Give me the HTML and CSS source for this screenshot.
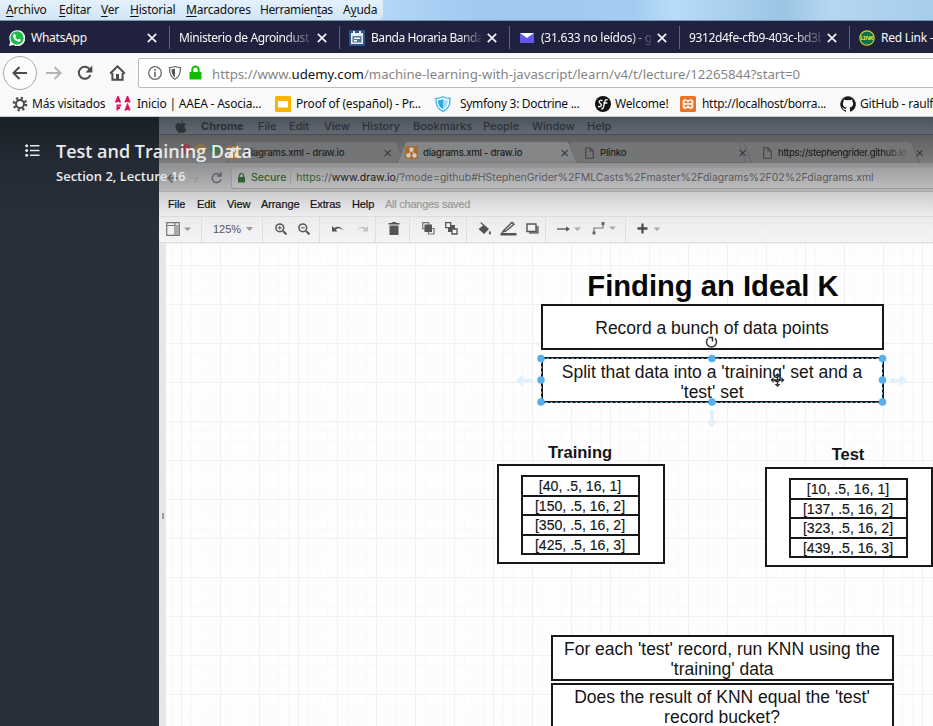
FILE: index.html
```html
<!DOCTYPE html>
<html lang="es">
<head>
<meta charset="utf-8">
<title>Test and Training Data</title>
<link rel="stylesheet" href="styles.css">
</head>
<body>
<nav class="menubar">
  <div class="menus"><span><u>A</u>rchivo</span><span><u>E</u>ditar</span><span><u>V</u>er</span><span><u>H</u>istorial</span><span><u>M</u>arcadores</span><span>Herramien<u>t</u>as</span><span>A<u>y</u>uda</span></div>
</nav>
<div class="tabs">
  <div class="tab">
    <svg class="fav" viewBox="0 0 16 16"><path d="M0 16l1.2-4.2A8 8 0 1 1 4.200 15z" fill="#fff"/><circle cx="8" cy="8" r="6.700" fill="#20b94b"/><path d="M4.600 4.300l1.400-.3 1 2.200-.7 1q.9 1.700 2.700 2.500l.9-1 2.100 1q-.2 2-2.200 2-5-.9-5.700-5.500z" fill="#fff"/></svg>
    <span class="label t1">WhatsApp</span><svg class="close" viewBox="0 0 10 10"><path d="M.8.8l8.400 8.400M9.200.8L.8 9.200"/></svg>
  </div>
  <div class="tab"><span class="label t2 fade">Ministerio de Agroindust</span><svg class="close" viewBox="0 0 10 10"><path d="M.8.8l8.400 8.400M9.200.8L.8 9.200"/></svg></div>
  <div class="tab">
    <svg class="fav" viewBox="0 0 16 16"><path fill="#2d5688" d="M0 0h16v16H0z"/><path fill="#e8eef5" d="M2 3h2V1h2v2h4V1h2v2h2v11H2z"/><path fill="#54779f" d="M3.500 6h9v6.500h-9z"/><path fill="#fff" d="M5 7.500h6v1.500H5zM5 10h3v1.500H5z"/></svg>
    <span class="label t3 fade">Banda Horaria Banda</span><svg class="close" viewBox="0 0 10 10"><path d="M.8.8l8.400 8.400M9.200.8L.8 9.200"/></svg>
  </div>
  <div class="tab">
    <svg class="fav" viewBox="0 0 16 16"><path fill="#6257ee" d="M1 3h14v10H1z"/><path d="M1 3h14l-7 5z" fill="#fff"/></svg>
    <span class="label t4 fade">(31.633 no leídos) - g</span><svg class="close" viewBox="0 0 10 10"><path d="M.8.8l8.400 8.400M9.200.8L.8 9.200"/></svg>
  </div>
  <div class="tab"><span class="label t5 fade">9312d4fe-cfb9-403c-bd3b</span><svg class="close" viewBox="0 0 10 10"><path d="M.8.8l8.400 8.400M9.200.8L.8 9.200"/></svg></div>
  <div class="tab">
    <svg class="fav" viewBox="0 0 16 16"><circle cx="8" cy="8" r="7.200" fill="#087250" stroke="#d8d41c" stroke-width="1.200"/><text x="8" y="10.300" font-size="6" font-weight="bold" fill="#dfe02a" text-anchor="middle" textLength="13">LINK</text></svg>
    <span class="label t6">Red Link -</span>
  </div>
</div>
<div class="navbar">
  <div class="back"><svg width="18" height="16" viewBox="0 0 18 16"><path d="M16 8H3M8.500 2L2.500 8l6 6"/></svg></div>
  <svg class="fwd" width="17" height="16" viewBox="0 0 17 16"><path d="M1 8h14M9.500 2l6 6-6 6"/></svg>
  <svg class="reload" width="16" height="16" viewBox="0 0 16 16"><path d="M13.400 10A6 6 0 1 1 12.800 4.500"/><path d="M15.300.5v7H8.500z" class="solid"/></svg>
  <svg class="home" width="17" height="16" viewBox="0 0 17 16"><path d="M1.200 8.500L8.500 1.400l7.300 7.100M3.400 8v6.800h10.200V8"/><path d="M7 9h3v6H7z" class="solid"/></svg>
  <div class="urlbox">
    <svg width="16" height="16" viewBox="0 0 16 16"><circle cx="8" cy="8" r="6.300" fill="none" stroke="#696969" stroke-width="1.300"/><path d="M7.200 4h1.600v1.700H7.200zM7.200 6.800h1.600V12H7.200z" fill="#696969"/></svg>
    <svg width="14" height="16" viewBox="0 0 14 16"><path d="M7 1.500q2.500 1 5.500 1.200 0 8.800-5.500 11.600Q1.500 11.500 1.500 2.700 4.500 2.500 7 1.500z" fill="none" stroke="#666" stroke-width="1.200"/><path d="M7 3.600q1.600.7 3.600.9-.2 5.500-3.600 7.700z" fill="#555" transform="matrix(-1 0 0 1 14 0)"/></svg>
    <svg width="13" height="16" viewBox="0 0 13 16"><path d="M.5 7h12v7.500H.5z" fill="#12bc00"/><path d="M3.300 7V4.700a3.200 3.200 0 0 1 6.400 0V7" fill="none" stroke="#12bc00" stroke-width="2"/></svg>
    <span class="url">https://www.<b>udemy.com</b>/machine-learning-with-javascript/learn/v4/t/lecture/12265844?start=0</span>
  </div>
</div>
<div class="bookmarks">
  <a class="bm b1"><svg viewBox="0 0 16 16"><circle cx="8" cy="8" r="4" fill="none" stroke="#4a4a4f" stroke-width="2"/><circle cx="8" cy="8" r="6" fill="none" stroke="#4a4a4f" stroke-width="2.600" stroke-dasharray="2.200 2.512"/></svg><span>Más visitados</span></a>
  <a class="bm b2"><svg viewBox="0 0 16 16" fill="none" stroke="#df1264" stroke-width="1.900"><path d="M.8 6.500l2.200-5.500 2.200 5.500M2 5h2.500M10.300 6.500l2.200-5.500 2.200 5.500M11.500 5H14M2.500 14.500V9.500h3.500M2.500 12h2.500M10.300 14.500l2.200-5.500 2.200 5.500M11.500 13H14"/></svg><span>Inicio | AAEA - Asocia...</span></a>
  <a class="bm b3"><svg viewBox="0 0 16 16"><rect width="16" height="16" rx="1.500" fill="#f7b500"/><path fill="#fff" d="M3 5h10v6.500H3z"/></svg><span>Proof of (español) - Pr...</span></a>
  <a class="bm b4"><svg viewBox="0 0 16 16"><path d="M8 .8q3 1.700 7 1.700Q15.500 12 8 15.400.500 12 1 2.500 5 2.500 8 .8z" fill="#fff" stroke="#32b5ed" stroke-width="1.300"/><path d="M8 3q2 1.200 5 1.300Q12.700 11 8 13.300z" fill="#a9dcf5"/><path d="M8 3v10.300Q3 11 3 4.300 6 4.200 8 3z" fill="#2ca9e3"/></svg><span>Symfony 3: Doctrine ...</span></a>
  <a class="bm b5"><svg viewBox="0 0 16 16"><circle cx="8" cy="8" r="8" fill="#111"/><path d="M7.300 5.200Q6.700 3.700 5 4.500 3 6 5.500 7.500q2 2-.5 3.200-1.500.3-1.700-.8M12.500 4.200q-1.600-1.600-2.600 1L8.500 11Q7.800 13.500 6 12.800M8.300 7h4" fill="none" stroke="#fff" stroke-width="1.300"/></svg><span>Welcome!</span></a>
  <a class="bm b6"><svg viewBox="0 0 16 16"><rect width="16" height="16" rx="1.500" fill="#ec7323"/><path d="M5.500 4a2 2 0 1 0 0 4h5a2 2 0 1 0 0-4q-2 0-2.500 2Q7.500 4 5.500 4zM5.500 8a2 2 0 1 0 0 4q2 0 2.500-2 .5 2 2.500 2a2 2 0 1 0 0-4" fill="none" stroke="#fff" stroke-width="1.700"/></svg><span>http://localhost/borra...</span></a>
  <a class="bm b7"><svg viewBox="0 0 16 16"><path fill="#191717" d="M8 .2a8 8 0 0 0-2.500 15.500c.4.100.5-.2.500-.4v-1.400c-2.200.5-2.700-1-2.700-1-.4-.9-.9-1.200-.9-1.200-.7-.5.100-.5.100-.5.800.1 1.200.8 1.200.8.700 1.200 1.900.9 2.300.7.100-.5.300-.9.500-1.100-1.800-.2-3.600-.9-3.600-4 0-.9.300-1.600.8-2.100-.1-.2-.4-1 .1-2.100 0 0 .7-.2 2.200.8a7.700 7.700 0 0 1 4 0c1.500-1 2.200-.8 2.200-.8.4 1.100.2 1.900.1 2.100.5.600.8 1.300.8 2.100 0 3.100-1.900 3.800-3.700 4 .3.300.6.800.6 1.500v2.200c0 .2.100.5.600.4A8 8 0 0 0 8 .2z"/></svg><span>GitHub - raulf</span></a>
</div>
<main class="player">
  <div class="side"></div>
  <section class="video">
    <div class="macbar">
      <svg width="12" height="13" viewBox="0 0 12 13"><path fill="#2d3138" d="M8.300 0Q8.500 2 6 3.100 5.700 1 8.300 0zM6 3.700q1-.7 2.400-.7 1.600 0 2.600 1.300-1.700 1-1.500 3T11.500 9.800Q10 13 8.400 12.800q-1.400-.7-2.500-.2Q4 13.400 3 12.200-1 7.500 1 4.400 2.800 2 6 3.700z"/></svg>
      <strong>Chrome</strong><span>File</span><span>Edit</span><span>View</span><span>History</span><span>Bookmarks</span><span>People</span><span>Window</span><span>Help</span>
    </div>
    <div class="chrometabs">
      <svg class="shapes" width="774" height="29" viewBox="0 0 774 29"><circle cx="14" cy="14.500" r="5.500" fill="#8f4247"/><circle cx="29.500" cy="14.500" r="5.500" fill="#8f7241"/><circle cx="45" cy="14.500" r="5.500" fill="#41774a"/><path class="inactive" d="M56 29l9-20q1-2 3-2h161q3 0 4 2l8 20"/><path class="inactive" d="M417 29l-8-20h3q1-2 3-2h173q3 0 4 2l8 20zM594 29l-7-20 3-2h172q3 0 4 2l8 20"/><path class="active" d="M233 29l8-20q1-2 3-2h163q3 0 4 2l8 20z"/></svg>
      <div class="ct c1"><svg width="13" height="13" viewBox="0 0 13 13"><rect width="13" height="13" rx="1" fill="#aa6d2d"/><path d="M5 2h3v3H5zM2 8h3v3H2zM8 8h3v3H8zM6 5L4 8M7 5l2 3" fill="#ddd" stroke="#ddd"/></svg><span>diagrams.xml - draw.io</span><i>×</i></div>
      <div class="ct c2"><svg width="13" height="13" viewBox="0 0 13 13"><rect width="13" height="13" rx="1" fill="#ac6d29"/><path d="M5 2h3v3H5zM2 8h3v3H2zM8 8h3v3H8zM6 5L4 8M7 5l2 3" fill="#ccc" stroke="#ccc"/></svg><span>diagrams.xml - draw.io</span><i>×</i></div>
      <div class="ct c3"><svg width="9" height="12" viewBox="0 0 9 12"><path d="M.7.700H5L8.300 4v7.300H.7zM5 .7V4h3.300" fill="none" stroke="#444648" stroke-width="1.100"/></svg><span>Plinko</span><i>×</i></div>
      <div class="ct c4"><svg width="9" height="12" viewBox="0 0 9 12"><path d="M.7.700H5L8.300 4v7.300H.7zM5 .7V4h3.300" fill="none" stroke="#444648" stroke-width="1.100"/></svg><span class="long">https://stephengrider.github.io</span><i>×</i></div>
    </div>
    <div class="address">
      <svg class="arrows" width="64" height="14" viewBox="0 0 64 14" fill="none" stroke="#606164" stroke-width="1.500"><path d="M19 7H9M13.500 2.500L9 7l4.500 4.500"/><path d="M30 7h9M35 2.500L39.500 7 35 11.500" stroke="#9a9b9d"/><path d="M62 8.500A4.500 4.500 0 1 1 61 4M62 1v4h-4"/></svg>
      <div class="omni"><svg width="7" height="10" viewBox="0 0 7 10"><path d="M0 4h7v5.500H0z" fill="#2e6133"/><path d="M1.500 4.500v-2a2 2 0 0 1 4 0v2" fill="none" stroke="#2e6133" stroke-width="1.200"/></svg><span class="secure">Secure</span><span class="caddr"><em>https</em>://<b>www.draw.io</b>/?mode=github#HStephenGrider%2FMLCasts%2Fmaster%2Fdiagrams%2F02%2Fdiagrams.xml</span></div>
    </div>
    <div class="appmenu"><span>File</span><span>Edit</span><span>View</span><span>Arrange</span><span>Extras</span><span>Help</span><span class="saved">All changes saved</span></div>
    <div class="tools">
      <div class="tg g1"><svg width="26" height="14" viewBox="0 0 26 14"><path d="M.7.700h12.600v12.600H.7zM9 1v12M1 3.500h12" fill="none" stroke="#777" stroke-width="1.200"/><path d="M9 3h4v10H9z" fill="#aaa"/><path d="M18 5.500h7L21.500 9z" fill="#999"/></svg></div>
      <div class="tg g2"><span>125%</span><svg width="7" height="4" viewBox="0 0 7 4"><path d="M0 0h7L3.500 4z" fill="#999"/></svg></div>
      <div class="tg g3"><svg width="12" height="12" viewBox="0 0 12 12" fill="none" stroke="#555"><circle cx="4.800" cy="4.800" r="3.900" stroke-width="1.500"/><path d="M8 8l3.500 3.500" stroke-width="2"/><path d="M2.800 4.800h4M4.800 2.800v4"/></svg><svg width="12" height="12" viewBox="0 0 12 12" fill="none" stroke="#555"><circle cx="4.800" cy="4.800" r="3.900" stroke-width="1.500"/><path d="M8 8l3.500 3.500" stroke-width="2"/><path d="M2.800 4.800h4"/></svg></div>
      <div class="tg g4"><svg width="12" height="8" viewBox="0 0 12 8"><path d="M0 1v5.500h5.500L3.700 4.700Q8 1.500 11.500 6 8-.500 2.300 3z" fill="#555"/></svg><svg width="12" height="8" viewBox="0 0 12 8"><path d="M12 1v5.500H6.500l1.800-1.800Q4 1.500.5 6 4-.500 9.700 3z" fill="#c4c4c6"/></svg></div>
      <div class="tg g5"><svg width="12" height="13" viewBox="0 0 12 13"><path d="M.5 1h3l1-1h3l1 1h3v1.500H.5zM1.500 3.500h9V13h-9z" fill="#555"/></svg></div>
      <div class="tg g6"><svg width="13" height="13" viewBox="0 0 13 13"><path d="M.7.700h6v6h-6zM6.500 6.500h5.500v5.500H6.500z" fill="none" stroke="#777" stroke-width="1.200"/><path d="M2.500 2.500h7.500v7.500H2.500z" fill="#555"/></svg><svg width="13" height="13" viewBox="0 0 13 13"><path d="M3 3h7v7H3z" fill="#555"/><path d="M.7.700h5v5h-5zM7 7h5v5H7z" fill="#f3f3f5" stroke="#555" stroke-width="1.300"/></svg></div>
      <div class="tg g7"><svg width="13" height="13" viewBox="0 0 13 13"><path d="M3 0l8 7-5 5-5.500-5L5 3.500 2.300 1zM12 8.500q2 4-.2 4t.2-4" fill="#555"/></svg><svg width="17" height="15" viewBox="0 0 17 15"><path d="M.5 12h16v2.500H.5z" fill="#555"/><path d="M3.500 9.800L12 1.200l2 2-8.300 7-3 .8z" fill="none" stroke="#555" stroke-width="1.400"/></svg><svg width="13" height="12" viewBox="0 0 13 12"><path d="M3 9.500h8.500V3" fill="none" stroke="#777" stroke-width="2.500"/><path d="M1 1h9v7.500H1z" fill="#f3f3f5" stroke="#555" stroke-width="1.400"/></svg></div>
      <div class="tg g8"><svg width="24" height="8" viewBox="0 0 24 8"><path d="M0 4h10" stroke="#555" stroke-width="1.300"/><path d="M9 1.500L13 4 9 6.500z" fill="#555"/><path d="M17 2.500h7L20.500 6z" fill="#aaa"/></svg><svg width="24" height="13" viewBox="0 0 24 13"><path d="M2 11V6h9V2" fill="none" stroke="#777" stroke-width="1.200"/><path d="M.5 9.500h3v3h-3zM9.500 0h3v3h-3z" fill="#666"/><path d="M17 4.500h7L20.500 8z" fill="#aaa"/></svg></div>
      <div class="tg g9"><svg width="24" height="11" viewBox="0 0 24 11"><path d="M5.500.5v10M.5 5.500h10" stroke="#4c4c4e" stroke-width="2.300"/><path d="M16.500 4.500h7L20 8z" fill="#aaa"/></svg></div>
    </div>
    <div class="work">
      <div class="splitter"></div>
      <div class="canvas">
        <h1 class="node heading">Finding an Ideal K</h1>
        <div class="node box record">Record a bunch of data points</div>
        <div class="node box split">Split that data into a 'training' set and a<br>'test' set</div>
        <svg class="node handles" width="394" height="98" viewBox="0 0 394 98">
          <path d="M26.500 25.500h341v44h-341z" fill="none" stroke="#72bdf0" stroke-width="1" stroke-dasharray="2 3"/>
          <g fill="#56b0eb"><circle cx="26" cy="25.500" r="3.800"/><circle cx="197" cy="25.500" r="3.800"/><circle cx="367.500" cy="25.500" r="3.800"/><circle cx="26" cy="47" r="3.800"/><circle cx="367.500" cy="47" r="3.800"/><circle cx="26" cy="69" r="3.800"/><circle cx="197" cy="69" r="3.800"/><circle cx="367.500" cy="69" r="3.800"/></g>
          <g fill="#e2f1fc"><path d="M1 47.500l7-6v4h10v4H8v4zM392 47.500l-7-6v4h-10v4h10v4zM197 95l-6-7h4V77h4v11h4z"/></g>
          <g fill="none" stroke="#333" stroke-width="1.500"><path d="M193 5.500a5 5 0 1 0 7 0"/><path d="M193.500 4.500l4 0v4"/></g>
          <path d="M262.500 41.500v11M257 47h11" stroke="#333" stroke-width="1.500"/><path d="M262.500 40l3 3h-6zM262.500 54l3-3h-6zM255.500 47l3-3v6zM269.500 47l-3-3v6z" fill="#333"/>
        </svg>
        <div class="node set training"><h2>Training</h2><div class="frame"><ul><li>[40, .5, 16, 1]</li><li>[150, .5, 16, 2]</li><li>[350, .5, 16, 2]</li><li>[425, .5, 16, 3]</li></ul></div></div>
        <div class="node set test"><h2>Test</h2><div class="frame"><ul><li>[10, .5, 16, 1]</li><li>[137, .5, 16, 2]</li><li>[323, .5, 16, 2]</li><li>[439, .5, 16, 3]</li></ul></div></div>
        <div class="node box each">For each 'test' record, run KNN using the<br>'training' data</div>
        <div class="node box result">Does the result of KNN equal the 'test'<br>record bucket?</div>
      </div>
    </div>
  </section>
  <header class="lecture">
    <svg width="15" height="13" viewBox="0 0 15 13" fill="#e6e7e9"><path d="M5 1h9.500v1.500H5zM5 5.800h9.500v1.500H5zM5 10.600h9.500v1.500H5z"/><circle cx="1.700" cy="1.700" r="1.500"/><circle cx="1.700" cy="6.500" r="1.500"/><circle cx="1.700" cy="11.300" r="1.500"/></svg>
    <div><div class="title">Test and Training Data</div><div class="section">Section 2, Lecture 16</div></div>
  </header>
</main>
</body>
</html>
```

FILE: styles.css
```css
* { box-sizing: border-box; }
body { margin: 0; width: 933px; height: 726px; overflow: hidden; font: 12px/16px "Noto Sans", sans-serif; color: #111; background: #f9f9fa; }
svg { flex: none; display: block; }
span { white-space: nowrap; }

.menubar { height: 21px; background: linear-gradient(90deg, #b4d8f8 0 40%, #9fc9ef 52%, #a2ccf1 68%, #b8dcf9 72%, #9cc5e5 84%, #b5d7f1 89%, #a6cdec); border-bottom: 1px solid #7895ad; }
.menus { display: grid; grid-template-columns: 53px 42px 29px 56px 74px 83px 40px; width: 383px; height: 20px; padding-left: 6px; line-height: 20px; background: linear-gradient(#e4f1fb, #d1e5f6); border-radius: 0 0 5px 0; letter-spacing: -.2px; }
.menus span:nth-child(6) { letter-spacing: -.4px; }
.menus u { text-underline-offset: 2px; }

.tabs { display: flex; height: 32px; background: #20213f; color: #f9f9fa; overflow: hidden; }
.tab { flex: none; width: 170px; display: flex; align-items: center; gap: 6px; padding: 2px 13px 0 9px; position: relative; height: 32px; }
.tab + .tab::before { content: ""; position: absolute; left: -1px; top: 5px; width: 1px; height: 23px; background: #62637a; }
.fav { width: 16px; height: 16px; }
.label { flex: 1; min-width: 0; letter-spacing: -.25px; }
.t2 { letter-spacing: -.4px; } .t3 { letter-spacing: -.45px; } .t5 { letter-spacing: -.35px; }
.fade { -webkit-mask-image: linear-gradient(90deg, #000 80%, rgba(0,0,0,.15)); mask-image: linear-gradient(90deg, #000 80%, rgba(0,0,0,.15)); }
.close { width: 10px; height: 10px; fill: none; stroke: #f4f4f6; stroke-width: 1.7; }

.navbar { display: flex; align-items: center; height: 39px; padding: 1px 0 0 3px; background: #f9f9fa; }
.navbar > svg, .back svg { fill: none; stroke: #4a4a4f; stroke-width: 2; }
.navbar svg .solid { fill: #4a4a4f; stroke: none; }
.back { flex: none; width: 34px; height: 34px; border: 1px solid #aaaaac; border-radius: 50%; background: #fcfcfc; display: flex; align-items: center; justify-content: center; }
.navbar > .fwd { stroke: #b4b4b6; margin-left: 8px; }
.reload { margin-left: 15px; }
.home { margin-left: 16px; }
.urlbox { flex: none; margin-left: 12px; width: 830px; height: 30px; border: 1px solid #bbb; border-radius: 2px; background: #fff; display: flex; align-items: center; padding-left: 8px; }
.urlbox svg + svg { margin-left: 5px; }
.urlbox svg:nth-child(3) { margin-left: 7px; }
.url { margin-left: 10px; font-size: 13.2px; color: #858585; padding-top: 1px; }
.url b { font-weight: 400; color: #111; }

.bookmarks { height: 25px; border-bottom: 1px solid #c8c8ca; display: flex; background: #f9f9fa; padding: 0 0 1px 12px; letter-spacing: -.2px; }
.bm { flex: none; display: flex; align-items: center; gap: 5px; }
.bm svg { width: 16px; height: 16px; }
.b1 { width: 103px; gap: 4px; } .b2 { width: 160px; gap: 6px; } .b3 { width: 160px; } .b4 { width: 160px; gap: 9px; letter-spacing: -.3px; } .b5 { width: 85px; gap: 4px; } .b6 { width: 160px; gap: 6px; letter-spacing: -.3px; } .b7 { gap: 4px; }

.player { position: relative; display: flex; height: 609px; background: #29303b; overflow: hidden; }
.side { flex: none; width: 159px; background: linear-gradient(#1b2027, #242a34 45px, #29303b 110px); }
.video { flex: none; width: 774px; overflow: hidden; font-family: Inter, sans-serif; }
.lecture { position: absolute; left: 25px; top: 22px; display: flex; gap: 16px; font-family: "Open Sans", sans-serif; font-weight: 600; color: #e9eaeb; white-space: nowrap; }
.lecture svg { margin-top: 5px; }
.title { font-size: 18px; line-height: 24px; }
.section { font-size: 13px; line-height: 18px; margin-top: 4px; }

.macbar { height: 18px; background: linear-gradient(#4d535b, #626973); border-bottom: 1px solid #454f5b; display: grid; grid-template-columns: 26px 57px 31px 35px 38px 51px 70px 49px 55px 40px; padding-left: 16px; align-items: center; font-size: 11px; line-height: 17px; color: #2c3037; font-weight: 500; padding-top: 1px; }
.chrometabs { height: 28px; display: flex; position: relative; background: linear-gradient(#5d5e60, #7b7c7e); font-size: 9.6px; letter-spacing: -.25px; color: #222; }
.shapes { position: absolute; left: 0; top: 0; height: 28px; }
.shapes .inactive { fill: #747577; stroke: #626365; }
.shapes .active { fill: #858688; stroke: #6b6c6e; }
.ct { flex: none; position: relative; display: flex; align-items: center; gap: 5px; width: 178px; padding: 7px 11px 0 0; }
.ct span { flex: 1; min-width: 0; font-weight: 500; }
.ct i { font: 15px/14px "Liberation Sans", sans-serif; letter-spacing: 0; color: #38393b; }
.c1 { margin-left: 68px; width: 178px; padding-right: 13px; }
.c2 { width: 178px; padding-right: 14px; }
.c3 { margin-left: 2px; width: 178px; gap: 6px; padding-right: 16px; }
.c4 { width: 165px; padding-right: 4px; gap: 6px; }
.ct .long { letter-spacing: -.38px; -webkit-mask-image: linear-gradient(90deg, #000 80%, rgba(0,0,0,.15)); mask-image: linear-gradient(90deg, #000 80%, rgba(0,0,0,.15)); }
.address { height: 29px; display: flex; align-items: center; background: linear-gradient(#8e8f91, #b8b8ba); border-bottom: 1px solid #aaaaac; padding-top: 1px; }
.omni { margin-left: 8px; flex: 1; height: 22px; background: linear-gradient(#a0a0a2, #bcbcbe); border: 1px solid #98989a; border-right: 0; border-radius: 3px 0 0 3px; display: flex; align-items: center; padding-left: 6px; font-size: 10.5px; }
.secure { color: #2e6133; margin-left: 6px; padding-right: 4px; border-right: 1px solid #999; line-height: 13px; font-weight: 500; }
.caddr { margin-left: 5px; color: #58595b; }
.caddr em { font-style: normal; color: #2e6133; } .caddr b { font-weight: 400; color: #151515; }
.appmenu { height: 24px; background: linear-gradient(#cdcdd0, #ededef); display: grid; grid-template-columns: 29px 30px 34px 49px 42px 33px auto; padding-left: 9px; font: 11px/24px "Liberation Sans", sans-serif; letter-spacing: -.1px; color: #111; -webkit-text-stroke: .2px; }
.saved { color: #98989a; letter-spacing: -.3px; }
.saved { letter-spacing: -.25px; }
.tools { height: 27px; display: flex; background: linear-gradient(#ececee, #f4f4f6); border-top: 1px solid #dcdcde; border-bottom: 1px solid #dcdcde; color: #555; font: 11px/14px "Liberation Sans", sans-serif; }
.tg { flex: none; display: flex; align-items: center; gap: 11px; border-right: 1px solid #dedee0; padding-bottom: 2px; }
.g1 { width: 43px; padding-left: 7px; } .g2 { width: 61px; padding-left: 11px; gap: 5px; } .g3 { width: 57px; padding-left: 12px; } .g4 { width: 56px; padding-left: 12px; gap: 12px; } .g5 { width: 34px; padding-left: 12px; } .g6 { width: 57px; padding-left: 12px; gap: 10px; } .g7 { width: 79px; padding-left: 11px; gap: 9px; } .g8 { width: 80px; padding-left: 11px; } .g9 { padding-left: 11px; border: 0; }

.work { display: flex; height: 484px; }
.splitter { flex: none; width: 7px; background: linear-gradient(#9a9a9c, #9a9a9c) 3px 270px / 2px 6px no-repeat #e6e6e7; }
.canvas { position: relative; flex: none; width: 767px; overflow: hidden; font-family: "Liberation Sans", sans-serif; color: #151515; background-color: #fefefe; border-top: 1px solid #f3f3f5;
  background-image: linear-gradient(90deg, #f1f1f4 1px, transparent 1px), linear-gradient(#f1f1f4 1px, transparent 1px), linear-gradient(90deg, #f9f9fb 1px, transparent 1px), linear-gradient(#f9f9fb 1px, transparent 1px);
  background-size: 39px 39px, 39px 39px, 9.75px 9.75px, 9.75px 9.75px; background-position: 15px 21px; }
.node { position: absolute; }
.heading { left: 372px; top: 25px; width: 350px; text-align: center; margin: 0; font-size: 29.2px; line-height: 34px; color: #080808; white-space: nowrap; }
.box { left: 375px; width: 343px; height: 46px; border: 2px solid #181818; background: #fff; display: flex; align-items: center; justify-content: center; text-align: center; font-size: 17.5px; line-height: 20.5px; white-space: nowrap; padding: 2px 1px 0 0; }
.record { top: 60px; }
.split { top: 113px; padding-top: 4px; }
.handles { left: 349px; top: 89px; }
.set { width: 168px; text-align: center; }
.set h2 { margin: 0; font-size: 16.5px; line-height: 20px; padding-right: 2px; }
.frame { height: 100px; border: 2px solid #181818; background: #fff; padding: 9px 23px 0 22px; }
.set ul { margin: 0; padding: 0; list-style: none; border: 2px solid #181818; height: 80px; }
.set li { height: 19.5px; font-size: 14.1px; line-height: 19px; border-bottom: 2px solid #181818; padding-right: 1px; -webkit-text-stroke: .15px; }
.set li:last-child { border: 0; }
.training { left: 331px; top: 198px; } .training h2 { margin-bottom: 2px; }
.test { left: 599px; top: 200px; } .test h2 { margin-bottom: 3px; }
.each { left: 385px; top: 391px; }
.result { left: 385px; top: 439px; }
```
